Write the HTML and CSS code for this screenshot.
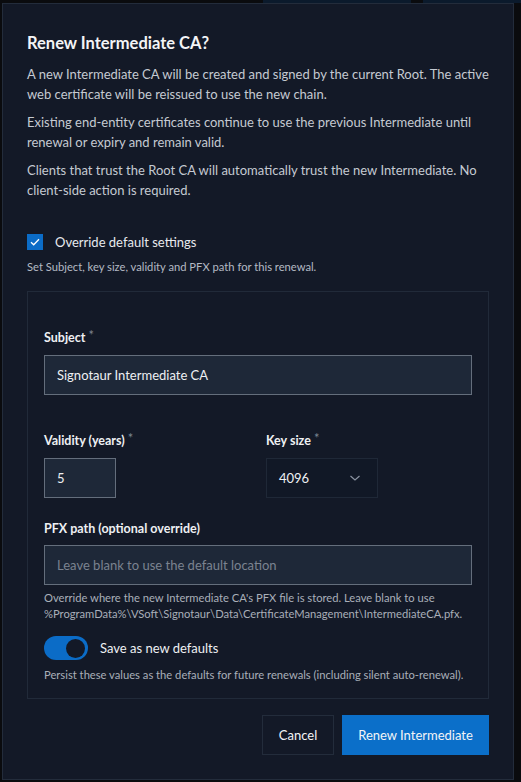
FILE: index.html
```html
<!DOCTYPE html>
<html lang="en">
<head>
    <meta charset="UTF-8">
    <title>Renew Intermediate CA</title>
    <link rel="stylesheet" href="styles.css">
</head>
<body>
    <div class="backdrop-bar">
        <span class="tab tab-a"></span>
        <span class="tab tab-b"></span>
    </div>

    <!-- Renew dialog -->
    <div class="dialog">
        <h2 class="dialog-title">Renew Intermediate CA?</h2>
        <p class="dialog-text">A new Intermediate CA will be created and signed by the current Root. The active web certificate will be reissued to use the new chain.</p>
        <p class="dialog-text">Existing end-entity certificates continue to use the previous Intermediate until renewal or expiry and remain valid.</p>
        <p class="dialog-text">Clients that trust the Root CA will automatically trust the new Intermediate. No client-side action is required.</p>

        <label class="check-row">
            <span class="checkbox">
                <svg width="10" height="8" viewBox="0 0 10 8"><path d="M1 4.2 L3.7 6.8 L9 1.2" fill="none" stroke="#fff" stroke-width="1.3"/></svg>
            </span>
            Override default settings
        </label>
        <div class="hint">Set Subject, key size, validity and PFX path for this renewal.</div>

        <div class="panel">
            <div class="field">
                <div class="field-label">Subject <span class="req">*</span></div>
                <div class="input">Signotaur Intermediate CA</div>
            </div>

            <div class="field-grid">
                <div class="field">
                    <div class="field-label">Validity (years) <span class="req">*</span></div>
                    <div class="input input-small">5</div>
                </div>
                <div class="field">
                    <div class="field-label">Key size <span class="req">*</span></div>
                    <div class="select">
                        4096
                        <svg width="12" height="8" viewBox="0 0 12 8"><path d="M1.5 2 L6 6 L10.5 2" fill="none" stroke="#8b93a1" stroke-width="1.2"/></svg>
                    </div>
                </div>
            </div>

            <div class="field field-pfx">
                <div class="field-label">PFX path (optional override)</div>
                <div class="input placeholder">Leave blank to use the default location</div>
                <div class="help">Override where the new Intermediate CA's PFX file is stored. Leave blank to use %ProgramData%\VSoft\Signotaur\Data\CertificateManagement\IntermediateCA.pfx.</div>
            </div>

            <label class="toggle-row">
                <span class="toggle"><span class="knob"></span></span>
                Save as new defaults
            </label>
            <div class="help help-toggle">Persist these values as the defaults for future renewals (including silent auto-renewal).</div>
        </div>

        <div class="actions">
            <button class="btn btn-cancel">Cancel</button>
            <button class="btn btn-primary">Renew Intermediate</button>
        </div>
    </div>
</body>
</html>
```

FILE: styles.css
```css
body {
    margin: 0;
    background-color: #0a0b0e;
    font-family: 'Lato', 'Noto Sans', sans-serif;
    color: #c3c8d0;
    height: 782px;
    overflow: hidden;
}

.backdrop-bar {
    height: 3px;
    display: flex;
}

.tab {
    display: block;
    height: 3px;
    background-color: #0b1a2c;
}

.tab-a {
    margin-left: 263px;
    width: 148px;
}

.tab-b {
    margin-left: 12px;
    width: 98px;
}

.dialog {
    margin-left: 2px;
    width: 512px;
    height: 777px;
    box-sizing: border-box;
    background-color: #131927;
    border: 1px solid #232c3b;
    padding: 27px 24px 24px 24px;
    display: flex;
    flex-direction: column;
}

.dialog-title {
    margin: 0 0 9px 0;
    font-size: 16.5px;
    line-height: 24px;
    font-weight: 700;
    color: #f3f4f6;
}

.dialog-text {
    margin: 0 0 8px 0;
    font-size: 13px;
    line-height: 20px;
    color: #c5cad2;
}

.check-row {
    margin-top: 24px;
    display: flex;
    align-items: center;
    gap: 12px;
    font-size: 13px;
    line-height: 20px;
    color: #e8eaee;
}

.checkbox {
    width: 16px;
    height: 16px;
    background-color: #0b6cc7;
    display: flex;
    align-items: center;
    justify-content: center;
}

.hint {
    margin-top: 7px;
    font-size: 11.2px;
    line-height: 16px;
    color: #b4bac4;
}

.panel {
    margin-top: 16px;
    border: 1px solid #212a39;
    padding: 37px 16px 15px 16px;
}

.field-label {
    font-size: 12.5px;
    line-height: 18px;
    font-weight: 700;
    color: #eef0f3;
    margin-bottom: 8px;
}

.req {
    color: #7d8591;
    font-weight: 400;
    font-size: 13px;
    line-height: 0;
    vertical-align: 2px;
}

.input {
    height: 40px;
    box-sizing: border-box;
    background-color: #1e2838;
    border: 1px solid #646e7c;
    padding: 0 12px;
    display: flex;
    align-items: center;
    font-size: 13px;
    color: #eef0f3;
}

.input-small {
    width: 72px;
}

.placeholder {
    color: #7b8390;
}

.field-grid {
    margin-top: 37px;
    display: grid;
    grid-template-columns: 1fr 1fr;
    gap: 16px;
}

.select {
    width: 112px;
    height: 40px;
    box-sizing: border-box;
    border: 1px solid #1f2837;
    background-color: #111826;
    display: flex;
    align-items: center;
    justify-content: space-between;
    padding: 0 16px 0 12px;
    font-size: 13px;
    color: #eef0f3;
}

.field-pfx {
    margin-top: 22px;
}

.field-pfx .field-label {
    margin-bottom: 7px;
}

.help {
    margin-top: 5px;
    font-size: 11.2px;
    line-height: 16px;
    color: #a9afb9;
}

.toggle-row {
    margin-top: 14px;
    display: flex;
    align-items: center;
    gap: 12px;
    font-size: 13px;
    color: #eef0f3;
}

.toggle {
    width: 44px;
    height: 24px;
    border-radius: 12px;
    background-color: #0b6cc7;
    display: flex;
    align-items: center;
    justify-content: flex-end;
    padding: 0 3px;
    box-sizing: border-box;
}

.knob {
    width: 19px;
    height: 19px;
    border-radius: 50%;
    background-color: #131927;
}

.help-toggle {
    margin-top: 7px;
}

.actions {
    margin-top: 16px;
    display: flex;
    justify-content: flex-end;
    gap: 8px;
}

.btn {
    height: 40px;
    font-family: inherit;
    font-size: 13px;
    color: #f3f4f6;
    border: 1px solid #232c3b;
    background: none;
    cursor: pointer;
}

.btn-cancel {
    width: 72px;
}

.btn-primary {
    width: 147px;
    background-color: #0b6fc9;
    border-color: #0b6fc9;
}
```
